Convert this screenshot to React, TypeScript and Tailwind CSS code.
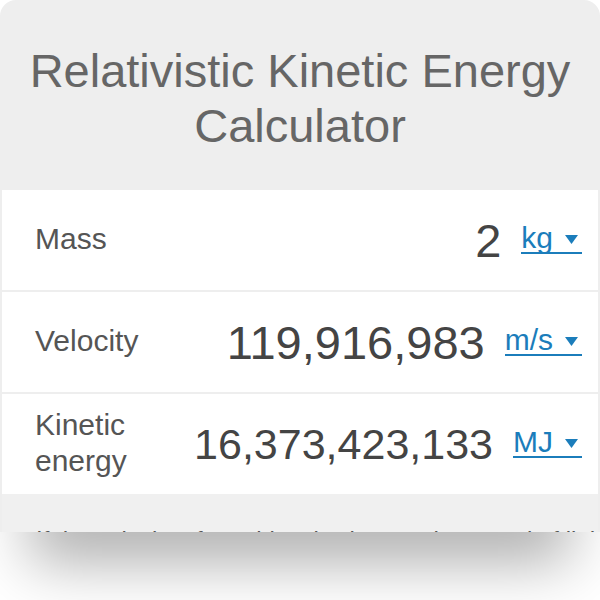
const rows = [
  { label: "Mass", value: "2", unit: "kg", size: "text-[47px]" },
  { label: "Velocity", value: "119,916,983", unit: "m/s", size: "text-[47px]" },
  { label: "Kinetic energy", value: "16,373,423,133", unit: "MJ", size: "text-[43px]" },
];

function Caret() {
  return (
    <svg width="13" height="9" viewBox="0 0 13 9" className="block">
      <path d="M0 0h13L6.5 9z" fill="currentColor" />
    </svg>
  );
}

export default function App() {
  return (
    <div className="h-[600px] w-[600px] overflow-hidden bg-white font-['Liberation_Sans',Arial,sans-serif]">
      <div className="h-[532px] overflow-hidden rounded-t-[16px] bg-[#eeeeee]">
        <header className="h-[190px] px-6 pt-[43px] text-center text-[47px] leading-[55px] text-[#666666]">
          Relativistic Kinetic Energy Calculator
        </header>

        <div className="flex flex-col gap-[2px] px-[2px]">
          {rows.map((r) => (
            <div key={r.label} className="flex h-[100px] items-center bg-white pl-[33px] pr-[16px]">
              <div className="-mt-[3px] min-w-0 flex-1 text-[30px] leading-[36px] text-[#555555]">{r.label}</div>
              <div className="flex shrink-0 items-center gap-[20px]">
                <span className={`${r.size} leading-none text-[#444444]`}>{r.value}</span>
                <button className="-mt-[2px] flex items-end text-[30px] text-[#1b7dbb]">
                  <span className="border-b-2 border-current leading-[28px]">{r.unit}</span>
                  <span className="flex items-end border-b-2 border-current pb-[8px] pl-[12px] pr-[4px]">
                    <Caret />
                  </span>
                </button>
              </div>
            </div>
          ))}
        </div>

        <div className="mx-[2px] h-[60px] overflow-hidden bg-[#f0f0f0] px-[34px] pt-[28px]">
          <p className="whitespace-nowrap text-[24px] leading-[36px] text-[#555555]">
            If the velocity of an object is close to the speed of light, the classical formula fails.
          </p>
        </div>
      </div>

      <div className="h-[68px] overflow-hidden">
        <div className="mx-[60px] -mt-[20px] h-[20px] shadow-[0_0_60px_30px_rgba(0,0,0,0.32)]" />
      </div>
    </div>
  );
}
